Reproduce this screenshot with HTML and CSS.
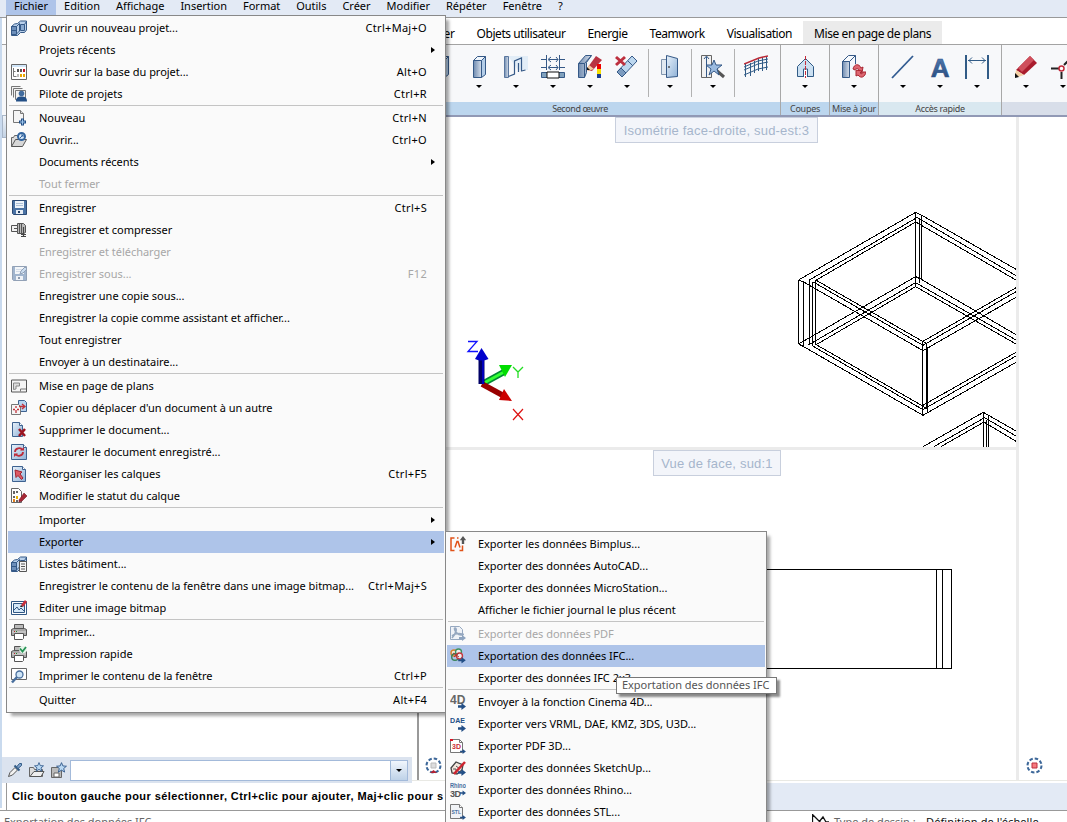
FILE: index.html
```html
<!DOCTYPE html>
<html lang="fr">
<head>
<meta charset="utf-8">
<title>Mise en page de plans</title>
<link rel="stylesheet" href="styles.css">
</head>
<body>
<svg class="defs" aria-hidden="true">
<defs>
<linearGradient id="gb" x1="0" y1="0" x2="1" y2="1"><stop offset="0" stop-color="#e8f2fb"/><stop offset="1" stop-color="#8fb1d6"/></linearGradient>
<linearGradient id="gd" x1="0" y1="0" x2="1" y2="0"><stop offset="0" stop-color="#6f8bb0"/><stop offset="1" stop-color="#d5deea"/></linearGradient>
<linearGradient id="ga" x1="0" y1="0" x2="0" y2="1"><stop offset="0" stop-color="#5b82b8"/><stop offset="1" stop-color="#1f4474"/></linearGradient>
<symbol id="building" viewBox="0 0 16 16"><path d="M.5 6.500l3-2.500 3-.5 3-2.500h6v9l-2 2.500h-4l-3 3h-6z" fill="#b9d0ea" stroke="#355987"/><path d="M.5 6.500h5v8h-5z" fill="#6d8fba" stroke="#355987"/><path d="M1 10.500h4M5.500 6.500l3-3M5.500 14l3-3V3.500M9.500 4.500h4v6h-4zM13.500 4.500l2-3" fill="none" stroke="#355987"/><path d="M10 5h3v5h-3z" fill="#8aaad0"/></symbol>
<symbol id="grid" viewBox="0 0 16 16"><path d="M.5.5h15v15H.5z" fill="#fff" stroke="#666"/><path d="M1 1h14v2H1z" fill="#d0e6fa"/><path d="M2.500 4v8.500h3M2.500 7.500h2" fill="none" stroke="#777"/><path d="M6 5h2v3H6zM9 5h2v3H9z" fill="#555"/><path d="M12 5h2v3h-2z" fill="#b12"/><path d="M6 10h2v3H6z" fill="#bbb"/><path d="M9 10h2v3H9zM12 10h2v3h-2z" fill="#e8a400"/></symbol>
<symbol id="pilot" viewBox="0 0 16 16"><path d="M.5 9.500V.5h9M2.500 11.500v-9h9M4.500 13.500v-9h10v9z" fill="#f2f2f2" stroke="#777"/><circle cx="10.500" cy="7.500" r="2.800" fill="#426c9e"/><path d="M5 15.500c0-4 2-5 5.500-5s5.500 1 5.500 5z" fill="#234f86"/></symbol>
<symbol id="new" viewBox="0 0 16 16"><path d="M2.500.5h7l3 3v9h-10z" fill="#f5f5f5" stroke="#777"/><path d="M9.500.5v3h3" fill="#ddd" stroke="#777"/><path d="M11.500 8.500v7M8 12h7" stroke="#234f86" stroke-width="3"/><path d="M11.500 9.500v5M9 12h5" stroke="#9cc4ea" stroke-width="1"/></symbol>
<symbol id="open" viewBox="0 0 16 16"><path d="M.5 14.500v-9h2l1-2h3l1 2h4v3" fill="#ddd" stroke="#666"/><path d="M.5 14.500l4-7h11l-4 7z" fill="#d7d7d7" stroke="#555"/><circle cx="10.500" cy="4.500" r="3.500" fill="#d8e8f8" stroke="#33659f" stroke-width="2"/><path d="M9 6l3-3M10 3h2v2" stroke="#33659f" fill="none"/></symbol>
<symbol id="save" viewBox="0 0 16 16"><path d="M1.500.5h14v14h-13l-1-1z" fill="#4a72a4" stroke="#2c4a74"/><path d="M4 1h9v7H4z" fill="#edf3f9"/><path d="M5 3.500h7M5 5.500h7" stroke="#adc0d8"/><path d="M5 10h7v4H5z" fill="#e8eef5"/><path d="M7 11h2v2H7z" fill="#223f66"/></symbol>
<symbol id="saveas" viewBox="0 0 16 16"><use href="#save"/><path d="M9 8l1-3 4-4 2 2-4 4z" fill="#9cc0e6" stroke="#2c4a74"/></symbol>
<symbol id="zip" viewBox="0 0 16 16"><path d="M6.500 1.500h6l2 2v7l-2 1h-6z" fill="#bbb" stroke="#555"/><path d="M.5 3.500h6v6h-6zM3 6.500h4M8.500 2v9M10.500 2v9" fill="#f2f2f2" stroke="#555"/><path d="M12.500 5v10M10 12.500h5M10 14.500h5" stroke="#444" stroke-width="1.200"/></symbol>
<symbol id="plan" viewBox="0 0 16 13"><path d="M.5.5h15v12H.5z" fill="#f5f5f5" stroke="#555"/><path d="M2.500 10V3.500h6v3H5v3z" fill="#ddd" stroke="#888"/><path d="M9.500 12V9.500H15" stroke="#777" fill="none"/></symbol>
<symbol id="copydoc" viewBox="0 0 16 16"><path d="M7.500.5h6l2 2v9h-8z" fill="#b6d3ef" stroke="#3e6290"/><path d="M.5 4.500h7l2 2v8h-9z" fill="#f5f5f5" stroke="#777"/><path d="M5 6v2M5 10v3M2 9.500h2M6 9.500h2M8 6.500h5M11 4l3 2.500L11 9" stroke="#c0303a" stroke-width="1.300" fill="none"/></symbol>
<symbol id="del" viewBox="0 0 16 16"><path d="M1.500.5h7l3 3v11h-10z" fill="url(#gb)" stroke="#3e6290"/><path d="M8.500.5v3h3" fill="#fff" stroke="#3e6290"/><path d="M8 7l6 7M14 7L8 14" stroke="#9c1420" stroke-width="2.500"/></symbol>
<symbol id="restore" viewBox="0 0 16 16"><path d="M.5.500h12l3 3v12H.5z" fill="url(#gb)" stroke="#3e6290"/><path d="M12.500.5v3h3" fill="#fff" stroke="#3e6290"/><path d="M4 8c0-4 6-5 7-2M12 8c0 4-6 5-7 2" fill="none" stroke="#bd2c3a" stroke-width="1.800"/><path d="M9 6.500h4V3zM7 9.500H3V13z" fill="#bd2c3a"/></symbol>
<symbol id="reorg" viewBox="0 0 16 16"><path d="M1.500.5h10l3 3v12h-13z" fill="url(#gb)" stroke="#3e6290"/><path d="M11.500.5v3h3" fill="#fff" stroke="#3e6290"/><path d="M4 4l7 2-2 2 3 4-1.500 1.500-3.500-4-2 2z" fill="#dc5964" stroke="#a2242f"/></symbol>
<symbol id="status" viewBox="0 0 16 16"><path d="M.5.5h7l3 3v11H.5z" fill="#fff" stroke="#666"/><path d="M2 3h2v3H2zM2 8h2v2H2zM5 3h2v2H5zM5 12h2v2H5z" fill="#666"/><path d="M2 11h2v3H2z" fill="#df7d20"/><path d="M5 8h2v3H5z" fill="#e9b300"/><path d="M8 12l5-7 3 3-5 5-3 1z" fill="#a52835" stroke="#7b1a25" stroke-width=".6"/></symbol>
<symbol id="lists" viewBox="0 0 16 16"><use href="#building"/><path d="M8.500 5.500h7v10h-7z" fill="#f5f5f5" stroke="#555"/><path d="M10 8h4M10 10.500h4M10 13h4" stroke="#555"/></symbol>
<symbol id="bitmap" viewBox="0 0 16 16"><path d="M.5 1.500h15v13H.5z" fill="#fff" stroke="#315885"/><path d="M2.500 3.500h11v9h-11z" fill="#d5e8f8" stroke="#315885"/><path d="M3 10l3-3 2 3 2-2 3 3" stroke="#315885" fill="none"/><path d="M10 5l4-5 2 2-4 5z" fill="#c7303d"/><path d="M9 7l1-2 2 2z" fill="#222"/></symbol>
<symbol id="print" viewBox="0 0 16 16"><path d="M3.500.5h9v5h-9z" fill="#bbb" stroke="#555"/><path d="M.5 5.500l2-1h11l2 1v6H.5z" fill="#a9a9a9" stroke="#555"/><path d="M1 8h14" stroke="#ddd"/><path d="M3.500 9.500h9v5l-1 1h-8z" fill="#fff" stroke="#555"/><path d="M3 7h1v1H3z" fill="#b22"/><path d="M5 7h1v1H5z" fill="#282"/></symbol>
<symbol id="qprint" viewBox="0 0 16 16"><use href="#print"/><circle cx="12" cy="3.500" r="3.800" fill="#e6f4e9"/><path d="M9 2.500l2.500 3L15 1" stroke="#259255" stroke-width="1.800" fill="none"/></symbol>
<symbol id="printwin" viewBox="0 0 16 16"><path d="M.5.5h15v11H.5z" fill="#fff" stroke="#666"/><circle cx="8.500" cy="6.500" r="3.500" fill="#cfe5f7" stroke="#496f9d" stroke-width="1.300"/><path d="M6 9l-5 5.500" stroke="#496f9d" stroke-width="2.500"/></symbol>
<symbol id="go" viewBox="0 0 7 6"><path d="M0 2h3V0l4 3-4 3V4H0z" fill="#234f86"/></symbol>
<symbol id="bim" viewBox="0 0 16 16"><path d="M4.500 2H1v12.500h3.500M7 2h1.500M12.500 9.500v5H9.500M5 11.500l2-6h1l2 6" fill="none" stroke="#e05218" stroke-width="1.500"/><path d="M13 0l3.200 4.200h-2V8h-2.400V4.200h-2z" fill="#555"/></symbol>
<symbol id="pdf" viewBox="0 0 16 16"><path d="M.5.500h9l3 3v10H.5z" fill="#e5ecf5" stroke="#355987"/><path d="M2 12c5-6 5-10 3-10s2 8 7 7-6-3-10 1" stroke="#355987" fill="none" stroke-width="1.500"/><use href="#go" x="9" y="9" width="7" height="6"/></symbol>
<symbol id="ifc" viewBox="0 0 16 16"><circle cx="4" cy="5" r="3" fill="#f4e9d9" stroke="#d7822b" stroke-width="1.400"/><circle cx="8.500" cy="4" r="3" fill="#eee" stroke="#3f9160" stroke-width="1.400"/><circle cx="5" cy="9" r="3.300" fill="none" stroke="#388359" stroke-width="1.400"/><circle cx="9.500" cy="8" r="3" fill="#eee" stroke="#c63b3f" stroke-width="1.400"/><path d="M3 5l6 4M4 9l5-4" stroke="#a33"/><use href="#go" x="8" y="9" width="8" height="6.500"/></symbol>
<symbol id="c4d" viewBox="0 0 16 16"><text x="0" y="10" class="t4d">4D</text><use href="#go" x="8" y="9" width="8" height="7"/></symbol>
<symbol id="dae" viewBox="0 0 16 16"><text x="0" y="7" textLength="15" lengthAdjust="spacingAndGlyphs" class="tdae">DAE</text><use href="#go" x="8" y="9" width="8" height="7"/></symbol>
<symbol id="p3d" viewBox="0 0 16 16"><path d="M.5 1.500h9l3 3v10H.5z" fill="#fff" stroke="#777"/><path d="M9.500 1.500v3h3" fill="none" stroke="#777"/><path d="M0 1h3v2H0z" fill="#d12"/><text x="2" y="11" class="t3d">3D</text><use href="#go" x="10" y="11" width="6" height="5"/></symbol>
<symbol id="sku" viewBox="0 0 16 16"><path d="M1 8l5-6 7 3-1 5-5 4-5-1z" fill="#f3e6dc" stroke="#444" stroke-width="1.300"/><path d="M3 9h3v4M6 6l4 3" stroke="#555" fill="none"/><use href="#go" x="8" y="9" width="8" height="7"/><path d="M4 14L15 2" stroke="#ce2530" stroke-width="2.500"/></symbol>
<symbol id="rhino" viewBox="0 0 16 16"><text x="0" y="6" textLength="16" lengthAdjust="spacingAndGlyphs" class="trh">Rhino</text><text x="0" y="14.500" class="trh2">3D</text><use href="#go" x="10" y="8" width="6" height="6"/></symbol>
<symbol id="stl" viewBox="0 0 16 16"><path d="M.5.500h9l3 3v11H.5z" fill="#f1f3f6" stroke="#777"/><path d="M9.500.500v3h3" fill="#fff" stroke="#777"/><text x="1.500" y="10" class="tstl">STL</text><use href="#go" x="10" y="11" width="6" height="5"/></symbol>
<symbol id="box" viewBox="0 0 24 24"><path d="M14.500 5.500l4-4v18l-4 3z" fill="#b3cde8" stroke="#355987"/><path d="M6.500 5.500h8v17h-8z" fill="url(#gd)" stroke="#355987"/><path d="M6.500 5.500l4-4h8l-4 4z" fill="#f0f6fc" stroke="#355987"/></symbol>
<symbol id="target" viewBox="0 0 17 17"><circle cx="8.500" cy="8.500" r="7" fill="none" stroke="#3b6698" stroke-width="2" stroke-dasharray="3.500 2"/></symbol>
<symbol id="star" viewBox="0 0 12 12"><path d="M6 .7l1.500 3.600 3.900.3-3 2.500 1 3.900L6 8.900 2.600 11l1-3.900-3-2.500 3.900-.3z" fill="#b9d8f3" stroke="#30598b"/></symbol>
</defs>
</svg>

<div class="app">
  <nav class="menubar"><span class="on">Fichier</span><span>Edition</span><span>Affichage</span><span>Insertion</span><span>Format</span><span>Outils</span><span>Créer</span><span>Modifier</span><span>Répéter</span><span>Fenêtre</span><span>?</span></nav>
  <div class="tabs"><span>Atelier</span><span>Objets utilisateur</span><span>Energie</span><span>Teamwork</span><span>Visualisation</span><span class="cur">Mise en page de plans</span></div>
  <div class="ribbon">
    <section class="group g1">
      <div class="tools">
        <i class="tool"><svg><use href="#box"/></svg></i>
        <i class="tool"><svg><use href="#box"/></svg></i>
        <i class="tool"><svg viewBox="0 0 24 24"><path d="M4 1h20v14H14z" fill="#e2edf7"/><path d="M.5 1.500h4v21h-4z" fill="url(#gd)" stroke="#5a779f"/><path d="M4.500 21.500l6-2.500V6l7-3v13.500M10.500 6v13M14.500 17V8M17.500 16l4-1" fill="none" stroke="#355987" stroke-width="1.200"/></svg></i>
        <i class="tool"><svg viewBox="0 0 24 24"><path d="M5.500 0v15M18.500 0v15M0 4.500h6M18 4.500h6M0 12.500h6M18 12.500h6M8 4.500h9M8 12.500h9M10 2L7 4.500 10 7M15 2l2 2.500L15 7M10 10l-3 2.500 3 2.500M15 10l2 2.500-2 2.500" fill="none" stroke="#355987"/><path d="M.5 17.500h23v5H.5z" fill="#80a1bd" stroke="#355987"/><path d="M6 17h12v6H6z" fill="#fff" stroke="#111"/></svg></i>
        <i class="tool"><svg viewBox="0 0 24 24"><path d="M.5 8.500l7-8h6l-5 7v10l-2 5h-6z" fill="url(#gd)" stroke="#355987"/><path d="M.5 8.500h6v14M6.500 8.500l7-8" fill="none" stroke="#355987"/><path d="M10 12l8-11 6 4-10 11-5-1z" fill="#b83342"/><path d="M9 14l2-4 5 4-6 2z" fill="#f3caa0"/><path d="M9 15v-3l3 3z" fill="#111"/><path d="M19 9h4v5h-4z" fill="#e00"/><path d="M19 14h4v5h-4z" fill="#f6df00"/><path d="M19 19h4v4h-4z" fill="#173c91"/></svg></i>
        <i class="tool"><svg viewBox="0 0 24 24"><path d="M2 17L17 1l5 5L7 22z" fill="#bcd7ef" stroke="#355987"/><path d="M6 13l5 5M13 6l5 5M2 17l4-4 5 5-4 4z" fill="#7c9cc0" stroke="#355987"/><path d="M1 2l9 8M10 2L1 10" stroke="#bd2f3e" stroke-width="3"/></svg></i>
        <b class="sep"></b>
        <i class="tool"><svg viewBox="0 0 24 24"><path d="M3.500 4.500h5v15h-5z" fill="#e1e9f1" stroke="#8296ae"/><path d="M8.500.5l11 3v18l-11 1z" fill="url(#gb)" stroke="#355987"/><path d="M10 12h2" stroke="#111"/></svg></i>
        <b class="sep"></b>
        <i class="tool"><svg viewBox="0 0 24 24"><path d="M.5.5h10v22H.5z" fill="#f1f1f1" stroke="#666"/><path d="M5.500 22V2M3 4l2.500-3L8 4" fill="none" stroke="#355987"/><path d="M15 15l8 7" stroke="#555" stroke-width="3"/><path d="M13 5l2 5 6 0-5 4 2 6-5-4-5 4 2-6-5-4h6z" fill="#9bbbe0" stroke="#355987"/></svg></i>
        <b class="sep"></b>
        <i class="tool rail"><svg viewBox="0 0 24 24"><path d="M0 9L15 3l9-2" stroke="#b92a37" stroke-width="1.500" fill="none"/><path d="M0 12l14-6 10-2M0 15l14-6 10-2M0 20l14-6 10-2M1.500 9v13M6.500 8v13M10.500 6v12M14.500 4v12M18.500 3v13M22.500 2v13" fill="none" stroke="#315b86"/></svg></i>
      </div>
      <h2>Second œuvre</h2>
    </section>
    <section class="group g2"><div class="tools"><i class="tool"><svg viewBox="0 0 24 24"><path d="M4.500 21.500v-10l8-8 8 8v10z" fill="#cbe0f2" stroke="#315b86"/><path d="M10.500 22v-8h4v8" fill="#fff" stroke="#315b86"/><path d="M12.500 1v22" stroke="#c52c3c" stroke-dasharray="4 1"/></svg></i></div><h2>Coupes</h2></section>
    <section class="group g3"><div class="tools"><i class="tool"><svg viewBox="0 0 24 24"><path d="M6.500 8.500l7-8v16l-7 6z" fill="#f4f8fc"/><path d="M.5 6.500l6-6h7l-6 6z" fill="#f7fafd" stroke="#355987"/><path d="M.5 6.500h7v16h-7z" fill="url(#gd)" stroke="#355987"/><path d="M13.500.5V9" stroke="#355987"/><path d="M11 14c1-5 6-6 8-1l2-1-1 6-5-2 2-1c-1-2-3-2-4 0z" fill="#dd6670" stroke="#a82430"/><path d="M24 17c-1 5-5 7-8 3l-2 1v-6l6 1-2 2c1 1 3 1 3-1z" fill="#dd6670" stroke="#a82430"/></svg></i></div><h2>Mise à jour</h2></section>
    <section class="group g4"><div class="tools"><i class="tool"><svg viewBox="0 0 24 24"><path d="M1 23L22 1" stroke="#315b91" stroke-width="1.800"/></svg></i><i class="tool"><svg viewBox="0 0 24 24"><text x="12" y="22" text-anchor="middle" class="bigA">A</text></svg></i><i class="tool"><svg viewBox="0 0 24 24"><path d="M1 0v24M23 0v24" stroke="#315b86" stroke-width="2"/><path d="M3 5.500h18M7 2.500L4 5.500l3 3M17 2.500l3 3-3 3" fill="none" stroke="#315b86"/></svg></i></div><h2>Accès rapide</h2></section>
    <section class="group g5"><div class="tools"><i class="tool"><svg viewBox="0 0 24 24"><path d="M2 15L16 1l7 7L10 20z" fill="#a91c2d"/><path d="M4 13L16 1l4 4L8 17z" fill="#cf4f5c"/><path d="M2 15l8 5-6 2-3-2z" fill="#f4d0a5"/><path d="M1 18l4 4-4 1z" fill="#111"/></svg></i><i class="tool"><svg viewBox="0 0 24 24"><path d="M0 13.500h9M10.500 17v7M13 10l8-8" stroke="#222" stroke-width="2"/><circle cx="10.500" cy="13.500" r="2.500" fill="#fff" stroke="#c22b3a" stroke-width="1.500"/></svg></i></div><h2></h2></section>
  </div>

  <main class="work">
    <aside class="palette">
      <div class="filter">
        <svg viewBox="0 0 16 16"><path d="M1.500 14.500l1.500-4 5-5 2.500 2.500-5 5z" fill="#f2f2f2" stroke="#555"/><path d="M7.500 3.500l5 5" stroke="#315b86" stroke-width="2"/><path d="M9.500 5l3-3.500 2 0 0 2-3.500 3z" fill="#7fa3cd" stroke="#315b86"/></svg>
        <svg viewBox="0 0 16 16"><path d="M.5 14.500v-9h4l1 2h8v7z" fill="#ddd" stroke="#666"/><path d="M1 14.500l4-5h10l-3 5z" fill="#eee" stroke="#555"/><use href="#star" x="5" y="0" width="10" height="10"/></svg>
        <svg viewBox="0 0 16 16"><path d="M.5 5.500h10v10H.5z" fill="#bbb" stroke="#666"/><path d="M3 11h5v4H3z" fill="#fff" stroke="#666"/><use href="#star" x="5" y="0" width="11" height="11"/></svg>
        <div class="combo"><span></span><b></b></div>
      </div>
    </aside>
    <div class="views">
      <div class="view v1">
        <svg class="wire" viewBox="419 117 597 330">
          <g transform="translate(780 200) scale(.33333)">
            <path d="M56 240L407 37M88 240L407 55M106 242L407 66M407 37l17 8L708 208M407 50L708 227M407 66L708 240M407 37V260M418 60V250M424 45V238"/>
            <path d="M56 240V432M71 246V440M89 238V432M98 245V438M107 240V435M56 240l15 6L429 452M56 432l15 8L429 646"/>
            <path d="M98 245L429 436M107 240L440 431M56 432L407 230M85 435L407 248M107 435L407 260M407 230l17 8L708 404M407 248L708 420M407 260L708 432"/>
            <path d="M429 424L708 263M429 436L708 275M429 452L708 292M98 438L429 629M107 433L440 625M429 646L708 487M429 629L708 468M429 616L708 457M428 424V646M439 430V622M442 446V638"/>
            <path d="M429 740L610 637M462 740L610 655M483 740L610 667M610 637L708 693M610 651L708 708M610 665L708 724M610 637V744M619 660V744M626 645V744"/>
          </g>
        </svg>
        <span class="vlabel l1">Isométrie face-droite, sud-est:3</span>
        <svg class="axes" viewBox="460 335 70 90">
          <path d="M484 383L504 372" stroke="#083" stroke-width="6"/><path d="M484 383L504 372" stroke="#3f3" stroke-width="3"/><path d="M499 365h13l-7 12z" fill="#0d0"/>
          <path d="M482 384L504 396" stroke="#900" stroke-width="5.500"/><path d="M512 401l-13-1 5-11z" fill="#c00"/>
          <path d="M481.500 384V357" stroke="#006" stroke-width="6"/><path d="M483 384V357" stroke="#00b" stroke-width="2"/><path d="M475 359l6.500-11 7 11q-7 3-13.500 0z" fill="#00c"/>
          <path d="M468 341.500h9l-9 10h10" fill="none" stroke="#11f" stroke-width="1.300"/>
          <path d="M513 367l5 5 5-5M518 372v6" fill="none" stroke="#2d2" stroke-width="1.300"/>
          <path d="M513 409l10 11M523 409l-10 11" stroke="#d11" stroke-width="1.200"/>
        </svg>
      </div>
      <div class="view v2">
        <svg class="wire" viewBox="419 450 597 330"><path d="M600 569.500H951.500V668.500H600M936.500 570v98M942.500 570v98"/></svg>
        <span class="vlabel l2">Vue de face, sud:1</span>
        <svg class="target ta"><use href="#target"/><path d="M6 6h5v5H6z" fill="#ddd" stroke="#bbb"/><path d="M5 16l3.500-3 3.500 3z" fill="#b32232"/></svg>
      </div>
    </div>
    <div class="rest"><svg class="target"><use href="#target"/><path d="M6 6h5v5H6z" fill="#f77b7f" stroke="#bb3040"/></svg></div>
  </main>
  <footer class="prompt"><p>Clic bouton gauche pour sélectionner, Ctrl+clic pour ajouter, Maj+clic pour s</p><div></div></footer>
  <div class="statusbar"><span class="s1">Exportation des données IFC</span><svg viewBox="0 0 18 10"><path d="M.5 10V.5L10 10M7 8l4-5 3 5h3" fill="none" stroke="#111" stroke-width="1.300"/></svg><span class="s2">Type de dessin :</span><span class="s3">Définition de l'échelle</span></div>
</div>

<div class="edge"></div>

<ul class="menu file">
  <li><svg><use href="#building"/></svg><span>Ouvrir un nouveau projet...</span><kbd>Ctrl+Maj+O</kbd></li>
  <li class="sub"><span>Projets récents</span></li>
  <li><svg><use href="#grid"/></svg><span>Ouvrir sur la base du projet...</span><kbd>Alt+O</kbd></li>
  <li><svg><use href="#pilot"/></svg><span>Pilote de projets</span><kbd>Ctrl+R</kbd></li>
  <li class="line"></li>
  <li><svg><use href="#new"/></svg><span>Nouveau</span><kbd>Ctrl+N</kbd></li>
  <li><svg><use href="#open"/></svg><span>Ouvrir...</span><kbd>Ctrl+O</kbd></li>
  <li class="sub"><span>Documents récents</span></li>
  <li class="off"><span>Tout fermer</span></li>
  <li class="line"></li>
  <li><svg><use href="#save"/></svg><span>Enregistrer</span><kbd>Ctrl+S</kbd></li>
  <li><svg><use href="#zip"/></svg><span>Enregistrer et compresser</span></li>
  <li class="off"><span>Enregistrer et télécharger</span></li>
  <li class="off"><svg><use href="#saveas"/></svg><span>Enregistrer sous...</span><kbd>F12</kbd></li>
  <li><span>Enregistrer une copie sous...</span></li>
  <li><span>Enregistrer la copie comme assistant et afficher...</span></li>
  <li><span>Tout enregistrer</span></li>
  <li><span>Envoyer à un destinataire...</span></li>
  <li class="line"></li>
  <li><svg><use href="#plan"/></svg><span>Mise en page de plans</span></li>
  <li><svg><use href="#copydoc"/></svg><span>Copier ou déplacer d'un document à un autre</span></li>
  <li><svg><use href="#del"/></svg><span>Supprimer le document...</span></li>
  <li><svg><use href="#restore"/></svg><span>Restaurer le document enregistré...</span></li>
  <li><svg><use href="#reorg"/></svg><span>Réorganiser les calques</span><kbd>Ctrl+F5</kbd></li>
  <li><svg><use href="#status"/></svg><span>Modifier le statut du calque</span></li>
  <li class="line"></li>
  <li class="sub"><span>Importer</span></li>
  <li class="sub hot"><span>Exporter</span></li>
  <li><svg><use href="#lists"/></svg><span>Listes bâtiment...</span></li>
  <li><span>Enregistrer le contenu de la fenêtre dans une image bitmap...</span><kbd>Ctrl+Maj+S</kbd></li>
  <li><svg><use href="#bitmap"/></svg><span>Editer une image bitmap</span></li>
  <li class="line"></li>
  <li><svg><use href="#print"/></svg><span>Imprimer...</span></li>
  <li><svg><use href="#qprint"/></svg><span>Impression rapide</span></li>
  <li><svg><use href="#printwin"/></svg><span>Imprimer le contenu de la fenêtre</span><kbd>Ctrl+P</kbd></li>
  <li class="line"></li>
  <li><span>Quitter</span><kbd>Alt+F4</kbd></li>
</ul>

<ul class="menu export">
  <li><svg><use href="#bim"/></svg><span>Exporter les données Bimplus...</span></li>
  <li><span>Exporter des données AutoCAD...</span></li>
  <li><span>Exporter des données MicroStation...</span></li>
  <li><span>Afficher le fichier journal le plus récent</span></li>
  <li class="line"></li>
  <li class="off"><svg><use href="#pdf"/></svg><span>Exporter des données PDF</span></li>
  <li class="hot"><svg><use href="#ifc"/></svg><span>Exportation des données IFC...</span></li>
  <li><span>Exporter des données IFC 2x3</span></li>
  <li class="line"></li>
  <li><svg><use href="#c4d"/></svg><span>Envoyer à la fonction Cinema 4D...</span></li>
  <li><svg><use href="#dae"/></svg><span>Exporter vers VRML, DAE, KMZ, 3DS, U3D...</span></li>
  <li><svg><use href="#p3d"/></svg><span>Exporter PDF 3D...</span></li>
  <li><svg><use href="#sku"/></svg><span>Exporter des données SketchUp...</span></li>
  <li><svg><use href="#rhino"/></svg><span>Exporter des données Rhino...</span></li>
  <li><svg><use href="#stl"/></svg><span>Exporter des données STL...</span></li>
</ul>
<div class="tip">Exportation des données IFC</div>
</body>
</html>
```
FILE: styles.css
```css
* { box-sizing: border-box; margin: 0; padding: 0; }
body { width: 1067px; height: 822px; overflow: hidden; position: relative; background: #fff; color: #000; font: 11px/22px "Noto Sans", "Open Sans", sans-serif; letter-spacing: -.03px; white-space: nowrap; }
.defs { position: absolute; width: 0; height: 0; }
.app { display: flex; flex-direction: column; width: 1067px; height: 822px; overflow: hidden; }
.edge { position: absolute; left: 0; top: 18px; width: 2px; height: 790px; background: #c9daee; }
.edge::after { content: ""; position: absolute; left: 2px; top: 97px; width: 5px; height: 21px; background: linear-gradient(#f1f5fa, #c3d2e4); border: 1px solid #a9b7c9; border-right: 0; }

.menubar { display: flex; height: 18px; flex: none; padding-left: 6px; background: #e3eaf5; border-bottom: 1px solid #999; line-height: 12px; letter-spacing: -.02px; }
.menubar span { padding: 0 8px; height: 15px; }
.menubar .on { background: #aec4e9; }

.tabs { display: flex; height: 26px; flex: none; justify-content: flex-end; padding: 3px 125px 0 0; font-size: 12px; line-height: 26px; letter-spacing: -.43px; }
.tabs span { padding: 0 11px; }
.tabs .cur { background: #ebebeb; }

.ribbon { display: flex; height: 73px; flex: none; padding-left: 380px; background: #f7f8fa; border-top: 1px solid #a3a3a3; border-bottom: 2px solid #9199b5; }
.group { display: flex; flex-direction: column; border-right: 1px solid #a8a8a8; flex: none; overflow: hidden; }
.g1 { width: 401px; } .g2, .g3 { width: 49px; } .g4 { width: 123px; } .g5 { width: 75px; border: 0; }
.group h2 { height: 13px; background: #bcd6ee; text-align: center; font-weight: 400; font-size: 9px; line-height: 13px; letter-spacing: -.25px; color: #444; }
.g1 h2 { letter-spacing: -.4px; }
.g4 h2 { background: #d9e8f0; letter-spacing: -.3px; } .g5 h2 { background: #d8dee9; }
.tools { display: flex; height: 57px; align-items: flex-start; justify-content: center; }
.g1 .tools { justify-content: flex-start; padding-left: 43px; }
.g5 .tools { justify-content: flex-start; padding-left: 5px; }
.tool { width: 37px; height: 57px; flex: none; display: flex; flex-direction: column; align-items: center; padding-top: 10px; }
.tool svg { width: 24px; height: 24px; }
.tool::after { content: ""; margin-top: 6px; border: 3px solid transparent; border-top: 3px solid #000; border-bottom: 0; }
.rail::after { display: none; }
.sep { width: 1px; height: 48px; margin: 4px 2.500px; background: #b2b2b2; }
.bigA { font: 700 26px "Liberation Sans", sans-serif; fill: url(#ga); stroke: #2b528a; stroke-width: .6px; }

.work { display: flex; height: 664px; flex: none; border-bottom: 1px solid #e9e9e4; }
.palette { width: 417px; padding: 640px 0 0 2px; }
.filter { display: flex; align-items: center; gap: 6px; width: 410px; height: 26px; padding: 0 4px 0 5px; background: #dbe3ef; }
.filter svg { width: 16px; height: 16px; flex: none; }
.combo { display: flex; flex: 1; height: 21px; margin-left: -3px; background: #fff; border: 1px solid #a3bada; }
.combo span { flex: 1; }
.combo b { width: 17px; background: linear-gradient(#f1f6fc, #bed2e8); border-left: 1px solid #9eb7d7; display: flex; align-items: center; justify-content: center; }
.combo b::after { content: ""; border: 3px solid transparent; border-top: 3px solid #000; border-bottom: 0; }
.views { width: 602px; border-left: 2px solid #999; border-right: 3px solid #ebebeb; }
.view { position: relative; height: 330px; }
.v1 { height: 333px; border-bottom: 3px solid #ebebeb; }
.wire { display: block; width: 597px; height: 330px; }
.wire path { fill: none; stroke: #000; stroke-width: 1; vector-effect: non-scaling-stroke; shape-rendering: crispEdges; }
.vlabel { position: absolute; border: 1px solid #c8cfdd; background: #f3f5fa; color: #a6b5cc; font: 13px/25px "Liberation Sans", sans-serif; letter-spacing: .2px; text-align: center; }
.l1 { left: 196px; top: 0; width: 203px; height: 26px; }
.l2 { left: 234px; top: 0; width: 128px; height: 26px; }
.axes { position: absolute; left: 41px; top: 218px; width: 70px; height: 90px; }
.target { width: 17px; height: 17px; }
.ta { position: absolute; left: 6px; top: 307px; }
.rest { padding: 640px 0 0 7px; }

.prompt { display: flex; height: 30px; flex: none; border-bottom: 1px solid #999; padding: 2px 0 0 6px; }
.prompt p { width: 440px; flex: none; border-left: 1px solid #999; padding-left: 5px; font: 700 11px/26px "Liberation Sans", sans-serif; letter-spacing: .42px; }
.prompt div { flex: 1; background: #e3eaf5; }
.statusbar { display: flex; padding-left: 4px; height: 11px; overflow: hidden; line-height: 22px; color: #666; }
.statusbar .s1 { width: 808px; }
.statusbar svg { width: 18px; height: 10px; margin: 3px 4px 0 0; }
.statusbar .s2 { width: 92px; }
.statusbar .s3 { color: #111; letter-spacing: .1px; }

.menu { position: absolute; list-style: none; background: #fafafa; border: 1px solid #888; padding: 1px; box-shadow: 4px 4px 3px -1px rgba(0,0,0,.35); }
.file { left: 6px; top: 15px; width: 440px; height: 698px; }
.export { left: 445px; top: 531px; width: 322px; height: 300px; }
.menu li { display: flex; align-items: center; height: 22px; padding: 0 17px 0 31px; }
.menu li svg { width: 16px; height: 16px; margin: 0 12px 0 -28px; flex: none; }
.menu kbd { font: inherit; margin-left: auto; letter-spacing: .3px; }
.menu .line { height: 2px; margin: 0 1px; padding: 0; border-top: 1px solid #c4c4c4; }
.menu .hot { background: #aec4e9; }
.menu .off { color: #a7a7a7; }
.menu .off svg { opacity: .5; }
.sub::after { content: ""; margin-left: auto; margin-right: -8px; border: 3.500px solid transparent; border-left: 4px solid #000; border-right: 0; }
.tip { position: absolute; left: 616px; top: 677px; width: 161px; height: 17px; border: 1px solid #777; background: #fff; color: #555; line-height: 14px; padding-left: 5px; box-shadow: 3px 3px 2px rgba(0,0,0,.45); }

.t4d { font: 700 12px "Liberation Sans", sans-serif; fill: #666; letter-spacing: 0; }
.tdae { font: 700 8px "Liberation Sans", sans-serif; fill: #234f86; letter-spacing: 0; }
.t3d { font: 700 7px "Liberation Sans", sans-serif; fill: #c92d35; letter-spacing: 0; }
.trh { font: 700 7px "Liberation Sans", sans-serif; fill: #486f9f; letter-spacing: 0; }
.trh2 { font: 700 9px "Liberation Sans", sans-serif; fill: #555; letter-spacing: -.5px; }
.tstl { font: 700 5px "Liberation Sans", sans-serif; fill: #486f9f; letter-spacing: 0; }
```
